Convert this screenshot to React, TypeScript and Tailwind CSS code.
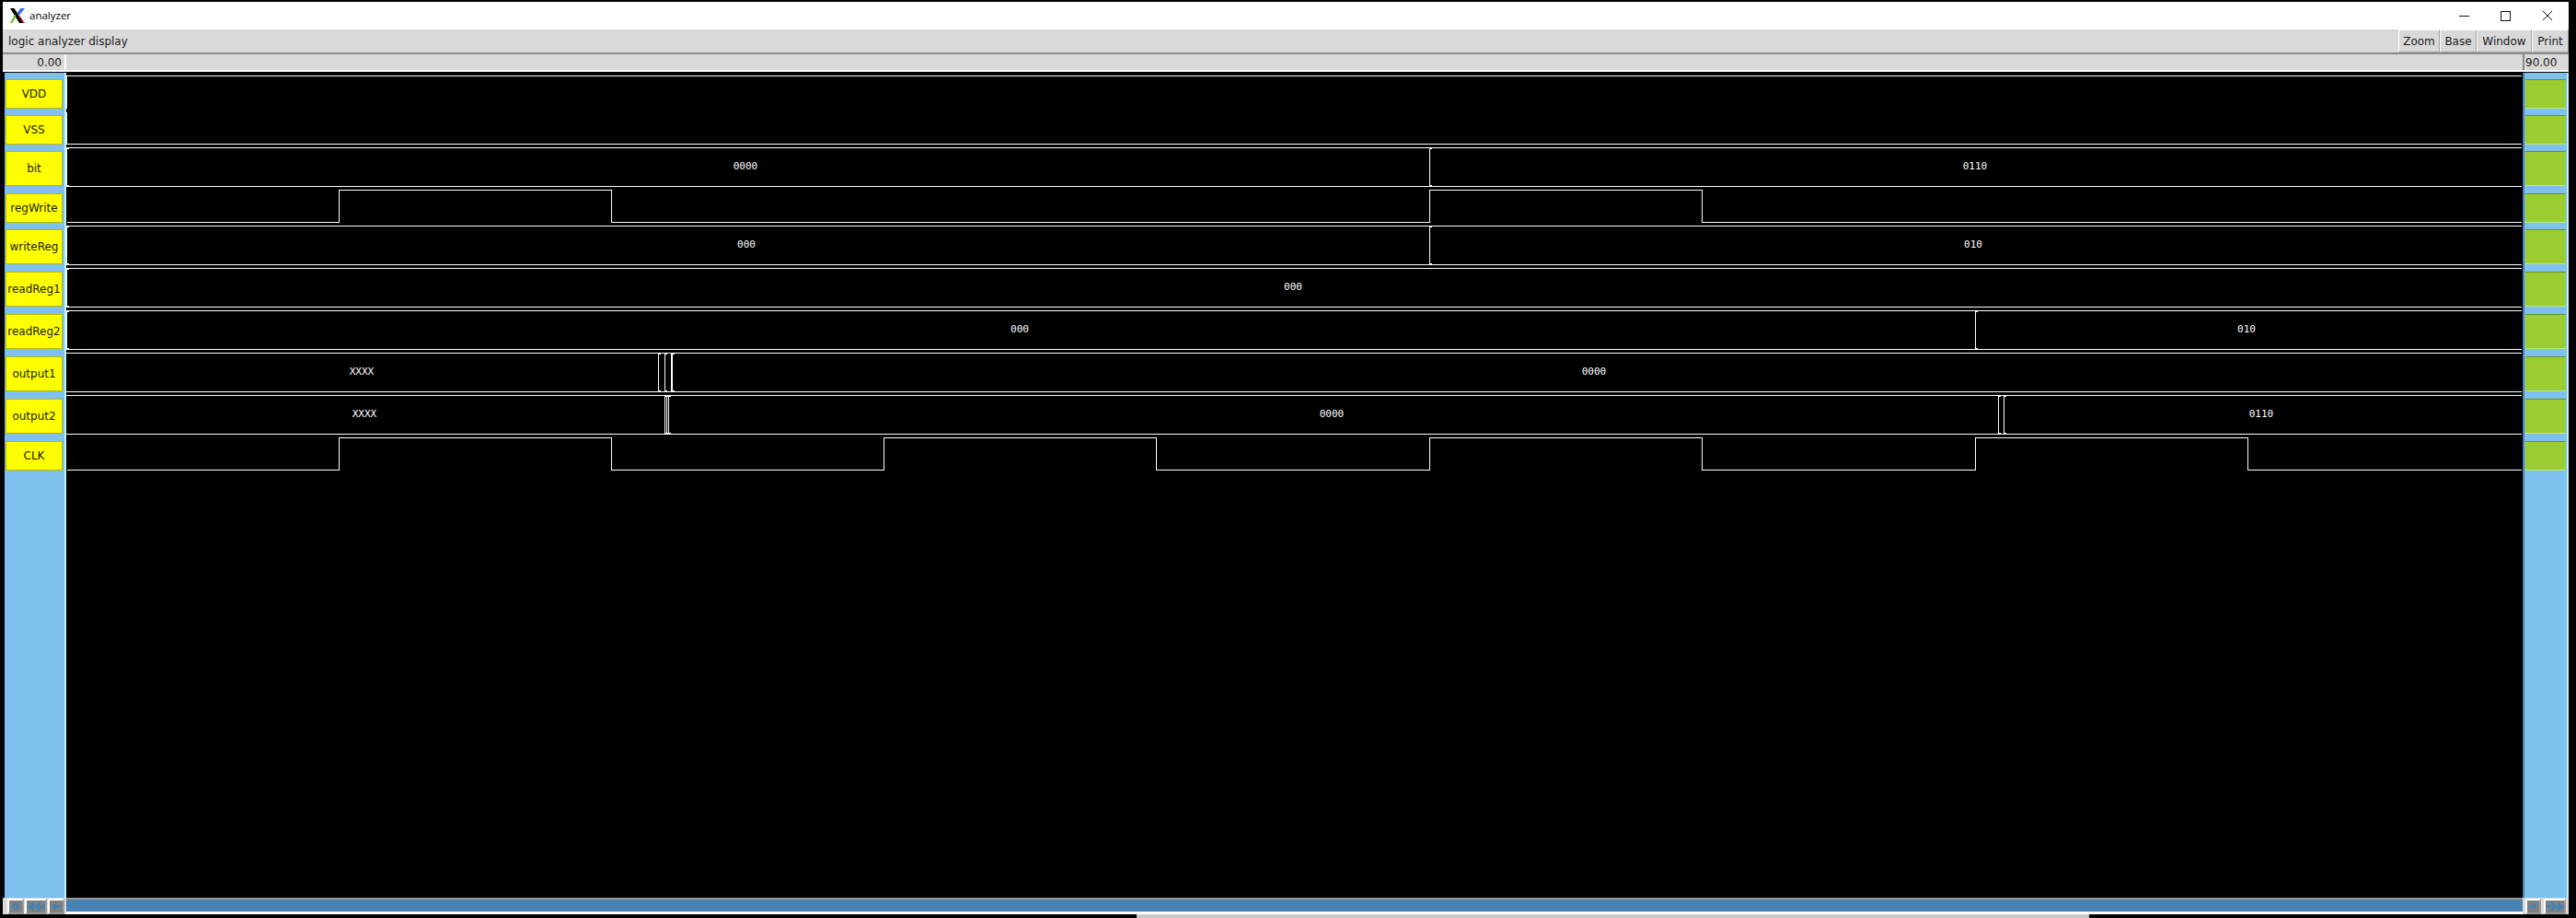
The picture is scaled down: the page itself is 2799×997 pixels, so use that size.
// @ts-nocheck
const uiFont = "font-['DejaVu_Sans',sans-serif]"

const signals = [
  { name: "VDD", bus: false },
  { name: "VSS", bus: false },
  { name: "bit", bus: true },
  { name: "regWrite", bus: false },
  { name: "writeReg", bus: true },
  { name: "readReg1", bus: true },
  { name: "readReg2", bus: true },
  { name: "output1", bus: true },
  { name: "output2", bus: true },
  { name: "CLK", bus: false },
]

const buses = [
  { top: 160.5, bot: 202.5, edges: [72.5, 1553.5], labels: [["0000", 810], ["0110", 2146]] },
  { top: 245.5, bot: 287.5, edges: [72.5, 1553.5], labels: [["000", 811], ["010", 2144]] },
  { top: 291.5, bot: 333.5, edges: [72.5], labels: [["000", 1405]] },
  { top: 337.5, bot: 379.5, edges: [72.5, 2146.5], labels: [["000", 1108], ["010", 2441]] },
  { top: 383.5, bot: 425.5, edges: [715.5, 722.5, 729.5, 730.5], labels: [["XXXX", 393], ["0000", 1732]] },
  { top: 429.5, bot: 471.5, edges: [722.5, 724.5, 726.5, 2171.5, 2177.5], labels: [["XXXX", 396], ["0000", 1447], ["0110", 2457]] },
]

// low/high square wave between the given toggle points
function wave(high, low, toggles) {
  let d = `M72.5 ${low}`
  let level = low
  for (const x of toggles) {
    d += ` H${x} V${level === low ? high : low}`
    level = level === low ? high : low
  }
  return d + " H2740"
}

function Bus({ top, bot, edges, labels }) {
  const mid = (top + bot) / 2 + 2.5
  let d = `M72 ${top} H2740 M72 ${bot} H2740`
  for (const x of edges) {
    // vertical plus the small notch where it meets the rails
    d += ` M${x} ${top + 1} V${bot - 1} M${x - 1} ${top + 1} H${x + 2} M${x - 1} ${bot - 1} H${x + 2}`
  }
  return (
    <g>
      <path d={d} />
      {labels.map(([text, x]) => (
        <text key={x} x={x} y={mid} textAnchor="middle" fill="#fff" stroke="none" fontFamily="'DejaVu Sans Mono', monospace" fontSize="11">
          {text}
        </text>
      ))}
    </g>
  )
}

function XLogo() {
  return (
    <svg width="18" height="18" viewBox="0 0 18 18">
      <path d="M1 1h4.500l10 16h-4.500z" fill="#000" />
      <path d="M15.500 17H17L11 8.500l-.8 1.300z" fill="#e0222a" />
      <path d="M8.500 6 12.500 1H17l-6.500 8z" fill="#2f6fe0" />
      <path d="M7.500 9.500 3.500 17H1l5-9.500z" fill="#6cc01e" />
    </svg>
  )
}

function ScrollBtn({ w, children }) {
  return (
    <div className={`${w} h-[17px] border-2 border-t-white border-l-white border-r-[#9a9a9a] border-b-[#9a9a9a] bg-[#808080] flex items-center justify-center overflow-hidden`}>
      <svg width="100%" height="13" viewBox="0 0 20 13" preserveAspectRatio="xMidYMid meet" fill="#4682b4">
        {children}
      </svg>
    </div>
  )
}

export default function App() {
  return (
    <div className={`h-[997px] w-[2799px] bg-black pt-[2px] overflow-hidden ${uiFont} text-[12px] text-[#1a1a1a]`}>
      <div className="ml-[3px] w-[2788px] h-[991px] flex flex-col bg-[#d9d9d9]">
        {/* title bar */}
        <div className="h-[30px] bg-white flex items-center pl-[7px]">
          <XLogo />
          <span className="ml-[4px] font-['Open_Sans',sans-serif] text-[11.5px] text-black">analyzer</span>
          <svg className="ml-auto" width="134" height="16" viewBox="0 0 134 16" fill="none" stroke="#111" strokeWidth="1">
            <path d="M15 8.500H26" />
            <rect x="60.500" y="3.500" width="10" height="10" />
            <path d="M106 3l10 10M116 3l-10 10" />
          </svg>
        </div>

        {/* toolbar */}
        <div className="h-[25px] flex items-center pl-[6px]">
          <span>logic analyzer display</span>
          <div className="ml-auto flex h-full">
            {[["Zoom", "w-[45px]"], ["Base", "w-[40px]"], ["Window", "w-[60px]"], ["Print", "w-[40px]"]].map(([label, w]) => (
              <div key={label} className={`${w} h-full flex items-center justify-center border-l border-t border-white border-r border-b border-r-[#a0a0a0] border-b-[#a0a0a0]`}>
                {label}
              </div>
            ))}
          </div>
        </div>
        <div className="h-[2px] bg-[#8c8c8c]" />

        {/* time row */}
        <div className="h-[19px] flex border-b-2 border-white">
          <div className="w-[69px] pl-[2px] border-r-2 border-white flex items-center justify-end pr-[3px]">0.00</div>
          <div className="flex-1" />
          <div className="w-[50px] border-l-2 border-[#8c8c8c] flex items-center pl-[1px]">90.00</div>
        </div>

        {/* main area */}
        <div className="flex-1 flex min-h-0 bg-black">
          <div className="w-[69px] pl-[2px] flex shrink-0">
            <div className="flex-1 mt-[1px] bg-[#7ec0ee] border-r-2 border-[#bff1ff] pt-[7px] pl-[1px] flex flex-col">
              {signals.map((s) => (
                <div key={s.name} className={s.bus ? "h-[46px] shrink-0" : "h-[39px] shrink-0"}>
                  <div className={`${s.bus ? "h-[38px]" : "h-[32px]"} w-[62px] bg-[#ffff00] border border-[#c2b400] flex items-center justify-center text-[#1a1a00]`}>
                    {s.name}
                  </div>
                </div>
              ))}
            </div>
          </div>

          <svg className="flex-1 block" viewBox="72 78 2669 897" width="2669" height="897" fill="none" stroke="#fff" strokeWidth="1" shapeRendering="crispEdges">
            <path d="M72.500 117.500 V82.500 H2740" />
            <path d="M72.500 121.500 V156.500 H2740" />
            <path d={wave(206.5, 241.5, [368.5, 664.5, 1553.5, 1849.5])} />
            <path d={wave(475.5, 510.5, [368.5, 664.5, 960.5, 1256.5, 1553.5, 1849.5, 2146.5, 2442.5])} />
            {buses.map((b) => (
              <Bus key={b.top} {...b} />
            ))}
          </svg>

          <div className="w-[50px] shrink-0 mt-[1px] bg-[#7ec0ee] border-l-2 border-[#4f7ea8] border-r-2 border-r-[#bff1ff] pt-[7px] pl-[1px] flex flex-col">
            {signals.map((s) => (
              <div key={s.name} className={s.bus ? "h-[46px] shrink-0" : "h-[39px] shrink-0"}>
                <div className={`${s.bus ? "h-[38px]" : "h-[32px]"} w-[44px] bg-[#9acd32] border-t border-t-[#6b8f23] border-b border-b-[#c4e67a]`} />
              </div>
            ))}
          </div>
        </div>

        {/* horizontal scroll bar */}
        <div className="h-[18px] flex items-end shrink-0">
          <div className="flex items-center gap-[1px] pl-[5px] w-[69px] shrink-0">
            <ScrollBtn w="w-[18px]">
              <path fillRule="evenodd" d="M10 1a5.500 5.500 0 1 0 0 11 5.500 5.500 0 0 0 0-11zm0 3a2.500 2.500 0 1 1 0 5 2.500 2.500 0 0 1 0-5z" />
            </ScrollBtn>
            <ScrollBtn w="w-[24px]">
              <path d="M1 6.500 8 .5v12zM8 6.500l7-6v12zM15 5h5v3h-5z" />
            </ScrollBtn>
            <ScrollBtn w="w-[18px]">
              <path d="M3 6.500 10 .5v4h8v4h-8v4z" />
            </ScrollBtn>
          </div>
          <div className="flex-1 h-full border-t-2 border-[#9a9a9a] bg-[#4682b4] border-b-[3px] border-b-white" />
          <div className="flex items-center gap-[3px] pl-[3px] w-[50px] shrink-0">
            <ScrollBtn w="w-[17px]">
              <path d="M17 6.500 10 .5v4H2v4h8v4z" />
            </ScrollBtn>
            <ScrollBtn w="w-[24px]">
              <path d="M20 6.500l-7-6v12zM13 6.500l-7-6v12zM0 5h6v3H0z" />
            </ScrollBtn>
          </div>
        </div>
      </div>

      {/* sliver of the window below */}
      <div className="ml-[1235px] w-[1035px] h-[4px] bg-[#c8c8c8]" />
    </div>
  )
}
